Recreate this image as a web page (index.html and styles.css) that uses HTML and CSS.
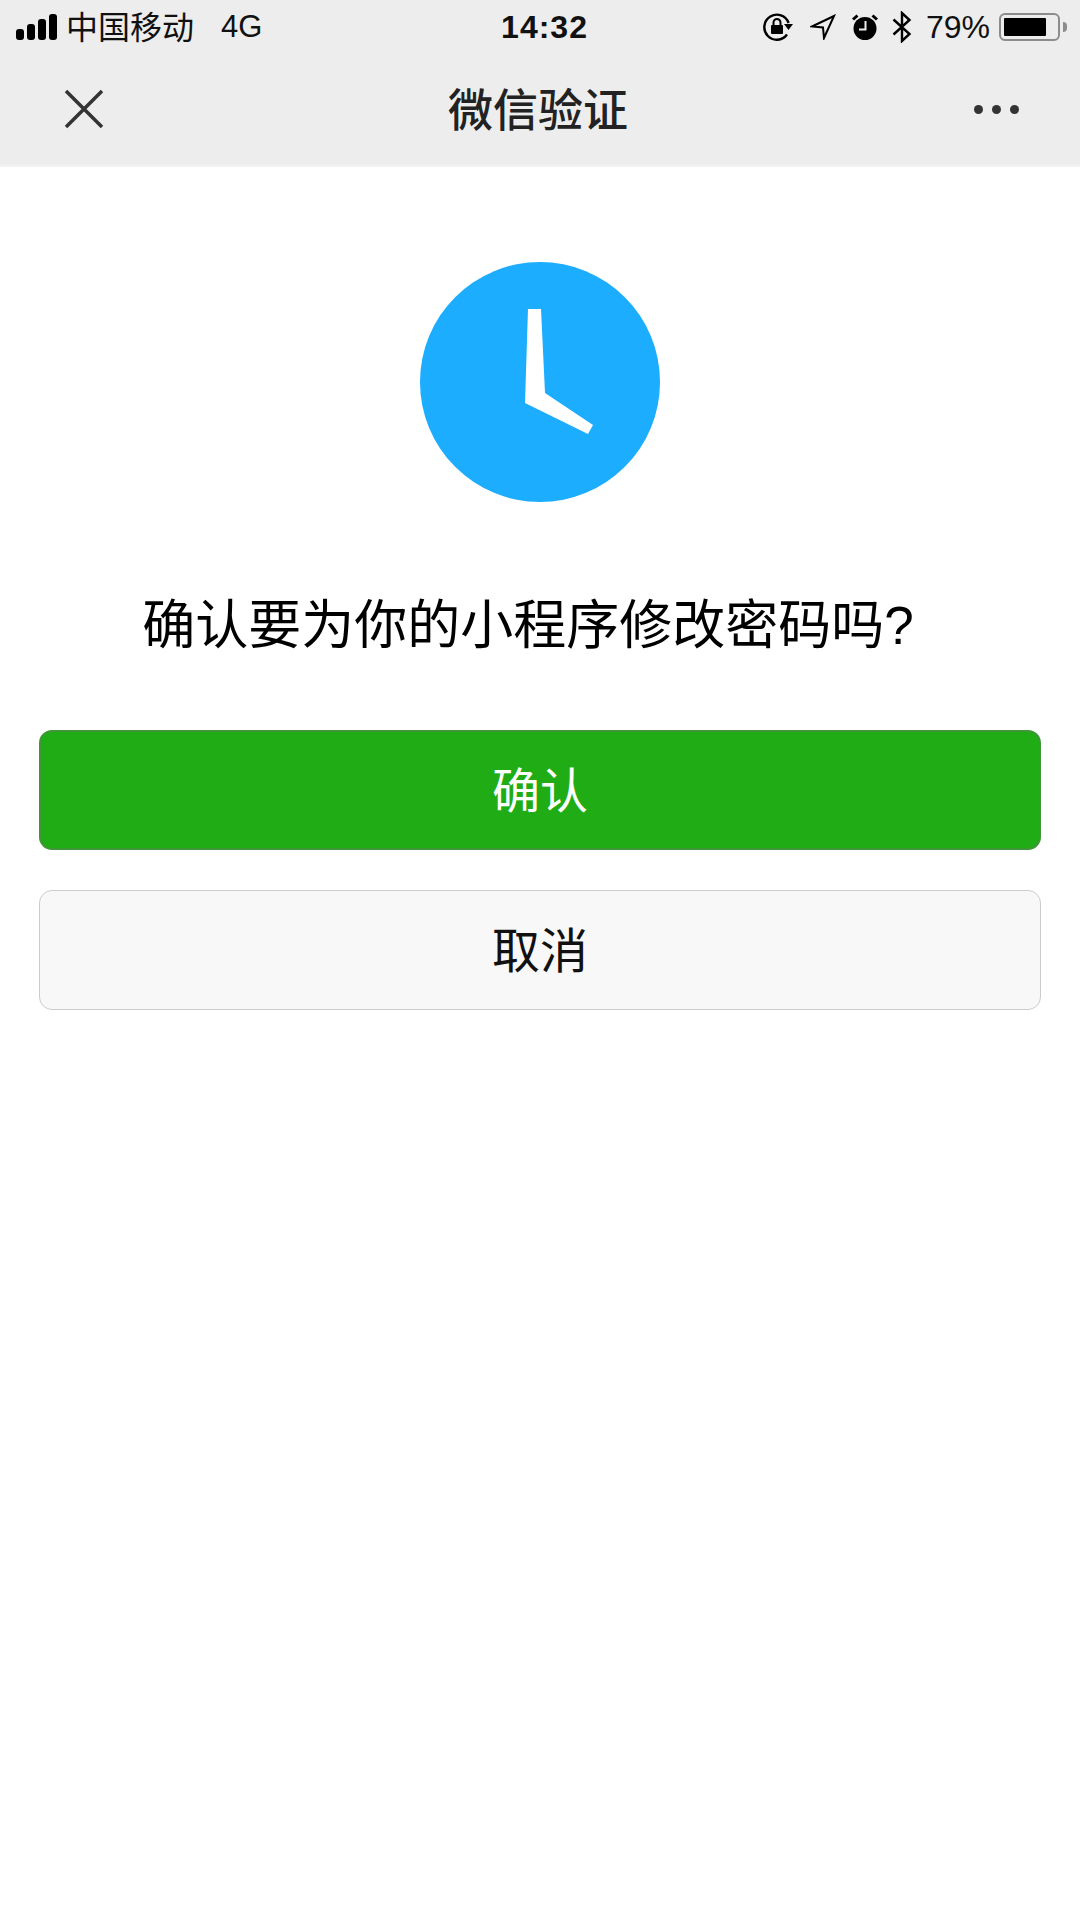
FILE: index.html
```html
<!DOCTYPE html>
<html lang="zh-CN">
<head>
    <meta charset="UTF-8">
    <meta name="viewport" content="width=device-width, initial-scale=1.0">
    <title>微信验证</title>
    <link rel="stylesheet" href="styles.css">
</head>
<body>
    <header class="top">
        <div class="status-bar">
            <div class="status-left">
                <svg class="signal" width="42" height="26" viewBox="0 0 42 26">
                    <rect x="0" y="15" width="8" height="11" rx="3" fill="#000"/>
                    <rect x="11" y="10" width="8" height="16" rx="3" fill="#000"/>
                    <rect x="22" y="5" width="8" height="21" rx="3" fill="#000"/>
                    <rect x="33" y="0" width="8" height="26" rx="3" fill="#000"/>
                </svg>
                <span class="carrier">中国移动</span>
                <span class="network">4G</span>
            </div>
            <div class="status-time">14:32</div>
            <div class="status-right">
                <svg class="icon-lock" width="30" height="28" viewBox="0 0 30 28">
                    <path d="M24 21.500A12.500 12.500 0 1 1 25.600 10" fill="none" stroke="#000" stroke-width="2.400"/>
                    <path d="M21 11h9l-4.500 6z" fill="#000"/>
                    <rect x="8" y="12" width="12" height="9" rx="1" fill="#000"/>
                    <path d="M10.500 12V9.500a3.500 3.500 0 0 1 7 0V12" fill="none" stroke="#000" stroke-width="2"/>
                </svg>
                <svg class="icon-arrow" width="26" height="26" viewBox="0 0 26 26">
                    <path d="M24 2L2 12.500l11 1 1 10.500z" fill="none" stroke="#000" stroke-width="2"/>
                </svg>
                <svg class="icon-alarm" width="26" height="26" viewBox="0 0 26 26">
                    <circle cx="13" cy="14.500" r="11.500" fill="#000"/>
                    <path d="M1 5.500L5.500 1.500M25 5.500L20.500 1.500" stroke="#000" stroke-width="3"/>
                    <path d="M13.500 7v8.500H7" fill="none" stroke="#ededed" stroke-width="2"/>
                </svg>
                <svg class="icon-bt" width="20" height="32" viewBox="0 0 20 32">
                    <path d="M1.500 8.500L17.500 23 10 30V2l7.500 7L1.500 23.500" fill="none" stroke="#000" stroke-width="2.400"/>
                </svg>
                <span class="battery-text">79%</span>
                <div class="battery">
                    <div class="battery-body"><div class="battery-fill"></div></div>
                    <div class="battery-nub"></div>
                </div>
            </div>
        </div>
        <div class="nav-bar">
            <svg class="nav-close" width="40" height="40" viewBox="0 0 40 40">
                <path d="M2 2L38 38M38 2L2 38" stroke="#333" stroke-width="3.500"/>
            </svg>
            <div class="nav-title">微信验证</div>
            <div class="nav-more"><i></i><i></i><i></i></div>
        </div>
    </header>

    <main class="content">
        <svg class="clock" width="240" height="240" viewBox="0 0 240 240">
            <circle cx="120" cy="120" r="120" fill="#1cadff"/>
            <path d="M108 47H121L125 131L173 163L168 172L105 141Z" fill="#fff"/>
        </svg>
        <h1 class="question">确认要为你的小程序修改密码吗?</h1>
        <button class="btn btn-ok">确认</button>
        <button class="btn btn-cancel">取消</button>
    </main>
</body>
</html>
```

FILE: styles.css
```css
body {
    margin: 0;
    background-color: #fff;
    font-family: "Liberation Sans", "Noto Sans CJK SC", sans-serif;
    color: #000;
}

.top {
    background-color: #ededed;
    height: 167px;
    border-bottom: 2px solid #f2f2f2;
    box-sizing: border-box;
}

.status-bar {
    height: 54px;
    display: grid;
    grid-template-columns: 1fr auto 1fr;
    align-items: center;
    padding: 0 13px 0 16px;
}

.status-left {
    display: flex;
    align-items: center;
}

.carrier {
    font-family: "Noto Sans CJK SC", sans-serif;
    font-size: 32px;
    margin-left: 8px;
    padding-bottom: 4px;
    color: #111;
}

.network {
    font-size: 31px;
    margin-left: 27px;
    color: #111;
}

.status-time {
    font-size: 32px;
    font-weight: bold;
    letter-spacing: 1px;
    padding-left: 6px;
    color: #111;
}

.status-right {
    display: flex;
    align-items: center;
    justify-content: flex-end;
}

.icon-arrow {
    margin-left: 17px;
}

.icon-alarm {
    margin-left: 16px;
}

.icon-bt {
    margin-left: 14px;
}

.battery-text {
    font-size: 32px;
    margin-left: 14px;
    color: #111;
}

.battery {
    display: flex;
    align-items: center;
    margin-left: 9px;
}

.battery-body {
    width: 61px;
    height: 28px;
    box-sizing: border-box;
    border: 2px solid #8c8c8c;
    border-radius: 6px;
    padding: 3px 12px 3px 3px;
}

.battery-fill {
    height: 100%;
    background-color: #000;
    border-radius: 1px;
}

.battery-nub {
    width: 4px;
    height: 10px;
    margin-left: 3px;
    background-color: #8c8c8c;
    border-radius: 0 4px 4px 0;
}

.nav-bar {
    height: 111px;
    display: grid;
    grid-template-columns: 1fr auto 1fr;
    align-items: center;
    padding: 0 61px 0 57px;
}

.nav-close {
    margin: 0 0 2px 7px;
}

.nav-title {
    font-family: "Noto Sans CJK SC", sans-serif;
    font-size: 45px;
    font-weight: 500;
    padding-bottom: 5px;
    color: #222;
}

.nav-more {
    display: flex;
    justify-content: flex-end;
    gap: 9px;
}

.nav-more i {
    width: 9px;
    height: 9px;
    border-radius: 50%;
    background-color: #333;
}

.content {
    display: flex;
    flex-direction: column;
    align-items: center;
    padding: 95px 39px 0;
}

.clock {
    display: block;
}

.question {
    margin: 86px 24px 66px 0;
    font-size: 53px;
    font-weight: 400;
    line-height: 76px;
    color: #000;
}

.btn {
    display: block;
    width: 100%;
    height: 120px;
    box-sizing: border-box;
    border-radius: 13px;
    font-family: "Noto Sans CJK SC", sans-serif;
    font-size: 48px;
    padding: 0 0 7px;
}

.btn-ok {
    background-color: #20ac14;
    border: 2px solid #3f9639;
    color: #fff;
    margin-bottom: 40px;
}

.btn-cancel {
    background-color: #f8f8f8;
    border: 1.5px solid #ccc;
    color: #111;
}
```
